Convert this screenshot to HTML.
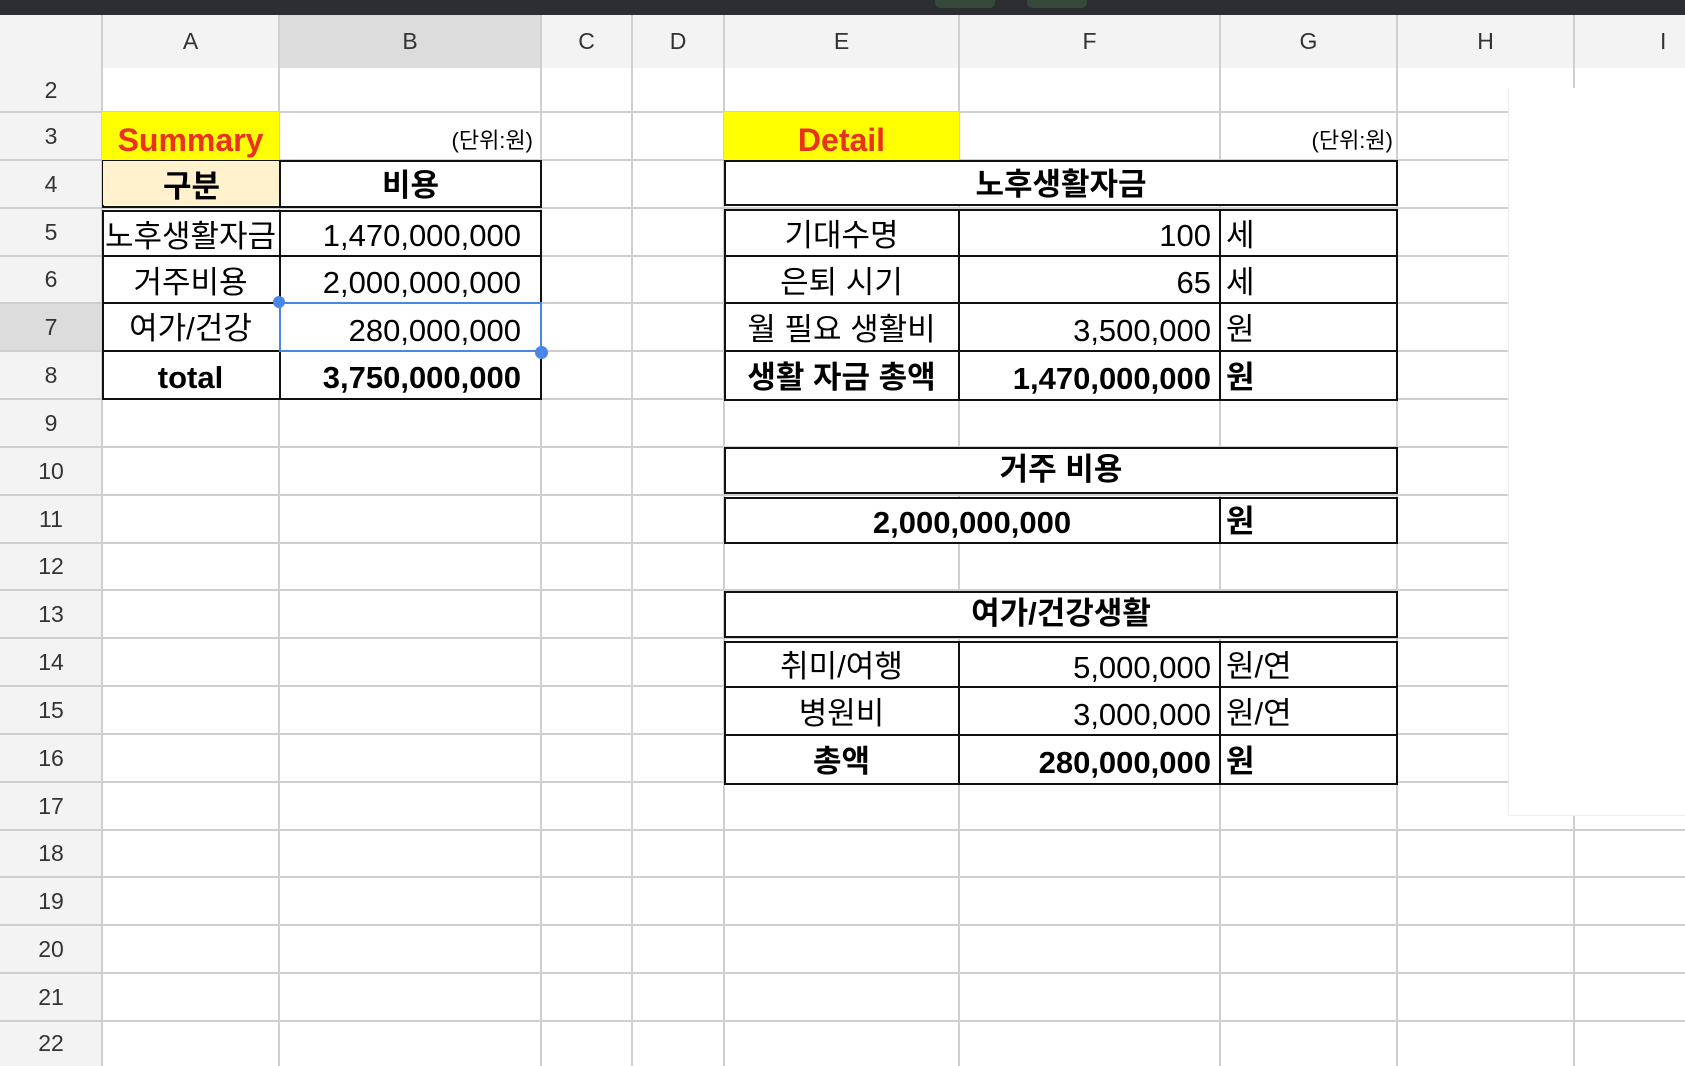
<!DOCTYPE html>
<html><head><meta charset="utf-8"><style>
*{margin:0;padding:0;box-sizing:border-box}
body{width:1685px;height:1066px;overflow:hidden;background:#fff;position:relative;font-family:"Liberation Sans","Noto Sans CJK KR",sans-serif;color:#000}
.a{position:absolute}
.top{left:0;top:0;width:1685px;height:15px;background:#2d2e31}
.tab{top:0;height:8px;background:#34493a;border-radius:0 0 5px 5px}
.colh{top:15px;height:53px;background:#f3f3f3;font-size:23px;color:#333;display:flex;align-items:center;justify-content:center}
.rowh{left:0;width:102px;background:#f3f3f3;font-size:23px;color:#333;display:flex;align-items:center;justify-content:center}
.vl{width:2px;background:#cfcfcf;top:15px;height:1051px}
.hl{height:2px;background:#cfcfcf;left:0;width:1685px}
.c{display:flex;align-items:center;font-size:31px;white-space:nowrap}
.ctr{justify-content:center}
.rt{justify-content:flex-end;padding-right:9px}
.lt{justify-content:flex-start;padding-left:6px}
.b{font-weight:bold}
.bx{border:2px solid #111}
</style></head><body>
<div class="a top"></div>
<div class="a tab" style="left:935px;width:60px"></div>
<div class="a tab" style="left:1027px;width:60px"></div>

<div class="a colh" style="left:0;width:102px"></div>
<div class="a colh" style="left:102px;width:177px">A</div>
<div class="a colh" style="left:279px;width:262px;background:#dcdcdc">B</div>
<div class="a colh" style="left:541px;width:91px">C</div>
<div class="a colh" style="left:632px;width:92px">D</div>
<div class="a colh" style="left:724px;width:235px">E</div>
<div class="a colh" style="left:959px;width:261px">F</div>
<div class="a colh" style="left:1220px;width:177px">G</div>
<div class="a colh" style="left:1397px;width:177px">H</div>
<div class="a colh" style="left:1574px;width:111px;justify-content:flex-start;padding-left:86px">I</div>

<div class="a rowh" style="top:68px;height:44px">2</div>
<div class="a rowh" style="top:112px;height:48px">3</div>
<div class="a rowh" style="top:160px;height:48px">4</div>
<div class="a rowh" style="top:208px;height:48px">5</div>
<div class="a rowh" style="top:256px;height:47px">6</div>
<div class="a rowh" style="top:303px;height:48px;background:#dcdcdc">7</div>
<div class="a rowh" style="top:351px;height:48px">8</div>
<div class="a rowh" style="top:399px;height:48px">9</div>
<div class="a rowh" style="top:447px;height:48px">10</div>
<div class="a rowh" style="top:495px;height:48px">11</div>
<div class="a rowh" style="top:543px;height:47px">12</div>
<div class="a rowh" style="top:590px;height:48px">13</div>
<div class="a rowh" style="top:638px;height:48px">14</div>
<div class="a rowh" style="top:686px;height:48px">15</div>
<div class="a rowh" style="top:734px;height:48px">16</div>
<div class="a rowh" style="top:782px;height:48px">17</div>
<div class="a rowh" style="top:830px;height:47px">18</div>
<div class="a rowh" style="top:877px;height:48px">19</div>
<div class="a rowh" style="top:925px;height:48px">20</div>
<div class="a rowh" style="top:973px;height:48px">21</div>
<div class="a rowh" style="top:1021px;height:45px">22</div>

<div class="a vl" style="left:101px"></div>
<div class="a vl" style="left:278px"></div>
<div class="a vl" style="left:540px"></div>
<div class="a vl" style="left:631px"></div>
<div class="a vl" style="left:723px"></div>
<div class="a vl" style="left:958px"></div>
<div class="a vl" style="left:1219px"></div>
<div class="a vl" style="left:1396px"></div>
<div class="a vl" style="left:1573px"></div>
<div class="a hl" style="top:111px"></div>
<div class="a hl" style="top:159px"></div>
<div class="a hl" style="top:207px"></div>
<div class="a hl" style="top:255px"></div>
<div class="a hl" style="top:302px"></div>
<div class="a hl" style="top:350px"></div>
<div class="a hl" style="top:398px"></div>
<div class="a hl" style="top:446px"></div>
<div class="a hl" style="top:494px"></div>
<div class="a hl" style="top:542px"></div>
<div class="a hl" style="top:589px"></div>
<div class="a hl" style="top:637px"></div>
<div class="a hl" style="top:685px"></div>
<div class="a hl" style="top:733px"></div>
<div class="a hl" style="top:781px"></div>
<div class="a hl" style="top:829px"></div>
<div class="a hl" style="top:876px"></div>
<div class="a hl" style="top:924px"></div>
<div class="a hl" style="top:972px"></div>
<div class="a hl" style="top:1020px"></div>

<div class="a" style="left:1508px;top:88px;width:177px;height:728px;background:#fff;border-left:1px solid #eee;border-bottom:1px solid #eee"></div>

<!-- Summary -->
<div class="a c ctr b" style="left:102px;top:112px;width:177px;height:48px;background:#ffff00;color:#e8321e;padding-top:8px;font-size:32px">Summary</div>
<div class="a c rt" style="left:279px;top:112px;width:262px;height:48px;font-size:22px;align-items:flex-end;padding-bottom:5px;padding-right:8px">(단위:원)</div>
<div class="a bx" style="left:102px;top:160px;width:440px;height:48px;background:#fff"></div>
<div class="a c ctr b" style="left:103px;top:161px;width:177px;height:44px;background:#fff2cc">구분</div>
<div class="a" style="left:279px;top:160px;width:2px;height:48px;background:#111"></div>
<div class="a c ctr b" style="left:281px;top:161px;width:259px;height:42px">비용</div>

<div class="a bx" style="left:102px;top:210px;width:440px;height:190px;background:#fff"></div>
<div class="a" style="left:279px;top:210px;width:2px;height:190px;background:#111"></div>
<div class="a" style="left:102px;top:255px;width:440px;height:2px;background:#111"></div>
<div class="a" style="left:102px;top:302px;width:440px;height:2px;background:#111"></div>
<div class="a" style="left:102px;top:350px;width:440px;height:2px;background:#111"></div>
<div class="a c ctr" style="left:102px;top:210px;width:177px;height:46px">노후생활자금</div>
<div class="a c rt" style="left:279px;top:213px;width:262px;height:46px;padding-right:20px">1,470,000,000</div>
<div class="a c ctr" style="left:102px;top:256px;width:177px;height:46px">거주비용</div>
<div class="a c rt" style="left:279px;top:260px;width:262px;height:46px;padding-right:20px">2,000,000,000</div>
<div class="a c ctr" style="left:102px;top:302px;width:177px;height:46px">여가/건강</div>
<div class="a c rt" style="left:279px;top:308px;width:262px;height:46px;padding-right:20px">280,000,000</div>
<div class="a c ctr b" style="left:102px;top:354px;width:177px;height:48px">total</div>
<div class="a c rt b" style="left:279px;top:354px;width:262px;height:48px;padding-right:20px">3,750,000,000</div>
<div class="a" style="left:279px;top:302px;width:263px;height:50px;border:2px solid #4a86e8"></div>
<div class="a" style="left:273px;top:296px;width:12px;height:12px;border-radius:50%;background:#4a86e8"></div>
<div class="a" style="left:535px;top:346px;width:13px;height:13px;border-radius:50%;background:#4a86e8"></div>

<!-- Detail -->
<div class="a c ctr b" style="left:724px;top:112px;width:235px;height:48px;background:#ffff00;color:#e8321e;padding-top:8px;font-size:32px">Detail</div>
<div class="a c rt" style="left:1220px;top:112px;width:177px;height:48px;font-size:22px;align-items:flex-end;padding-bottom:5px;padding-right:4px">(단위:원)</div>
<div class="a bx c ctr b" style="left:724px;top:160px;width:674px;height:46px;background:#fff;padding-bottom:4px">노후생활자금</div>

<div class="a bx" style="left:724px;top:209px;width:674px;height:192px;background:#fff"></div>
<div class="a" style="left:958px;top:209px;width:2px;height:192px;background:#111"></div>
<div class="a" style="left:1219px;top:209px;width:2px;height:192px;background:#111"></div>
<div class="a" style="left:724px;top:255px;width:674px;height:2px;background:#111"></div>
<div class="a" style="left:724px;top:302px;width:674px;height:2px;background:#111"></div>
<div class="a" style="left:724px;top:350px;width:674px;height:2px;background:#111"></div>
<div class="a c ctr" style="left:724px;top:209px;width:235px;height:46px">기대수명</div>
<div class="a c rt" style="left:959px;top:213px;width:261px;height:46px">100</div>
<div class="a c lt" style="left:1220px;top:209px;width:177px;height:46px">세</div>
<div class="a c ctr" style="left:724px;top:256px;width:235px;height:46px">은퇴 시기</div>
<div class="a c rt" style="left:959px;top:260px;width:261px;height:46px">65</div>
<div class="a c lt" style="left:1220px;top:256px;width:177px;height:46px">세</div>
<div class="a c ctr" style="left:724px;top:303px;width:235px;height:46px">월 필요 생활비</div>
<div class="a c rt" style="left:959px;top:308px;width:261px;height:46px">3,500,000</div>
<div class="a c lt" style="left:1220px;top:303px;width:177px;height:46px">원</div>
<div class="a c ctr b" style="left:724px;top:351px;width:235px;height:46px">생활 자금 총액</div>
<div class="a c rt b" style="left:959px;top:356px;width:261px;height:46px">1,470,000,000</div>
<div class="a c lt b" style="left:1220px;top:351px;width:177px;height:46px">원</div>

<div class="a bx c ctr b" style="left:724px;top:447px;width:674px;height:47px;background:#fff;padding-bottom:8px">거주 비용</div>
<div class="a bx" style="left:724px;top:497px;width:674px;height:47px;background:#fff"></div>
<div class="a" style="left:1219px;top:497px;width:2px;height:47px;background:#111"></div>
<div class="a c ctr b" style="left:724px;top:500px;width:496px;height:46px">2,000,000,000</div>
<div class="a c lt b" style="left:1220px;top:495px;width:177px;height:46px">원</div>

<div class="a bx c ctr b" style="left:724px;top:591px;width:674px;height:47px;background:#fff;padding-bottom:8px">여가/건강생활</div>
<div class="a bx" style="left:724px;top:641px;width:674px;height:144px;background:#fff"></div>
<div class="a" style="left:958px;top:641px;width:2px;height:144px;background:#111"></div>
<div class="a" style="left:1219px;top:641px;width:2px;height:144px;background:#111"></div>
<div class="a" style="left:724px;top:686px;width:674px;height:2px;background:#111"></div>
<div class="a" style="left:724px;top:734px;width:674px;height:2px;background:#111"></div>
<div class="a c ctr" style="left:724px;top:640px;width:235px;height:46px">취미/여행</div>
<div class="a c rt" style="left:959px;top:645px;width:261px;height:46px">5,000,000</div>
<div class="a c lt" style="left:1220px;top:640px;width:177px;height:46px">원/연</div>
<div class="a c ctr" style="left:724px;top:687px;width:235px;height:46px">병원비</div>
<div class="a c rt" style="left:959px;top:692px;width:261px;height:46px">3,000,000</div>
<div class="a c lt" style="left:1220px;top:687px;width:177px;height:46px">원/연</div>
<div class="a c ctr b" style="left:724px;top:735px;width:235px;height:46px">총액</div>
<div class="a c rt b" style="left:959px;top:740px;width:261px;height:46px">280,000,000</div>
<div class="a c lt b" style="left:1220px;top:735px;width:177px;height:46px">원</div>
</body></html>
